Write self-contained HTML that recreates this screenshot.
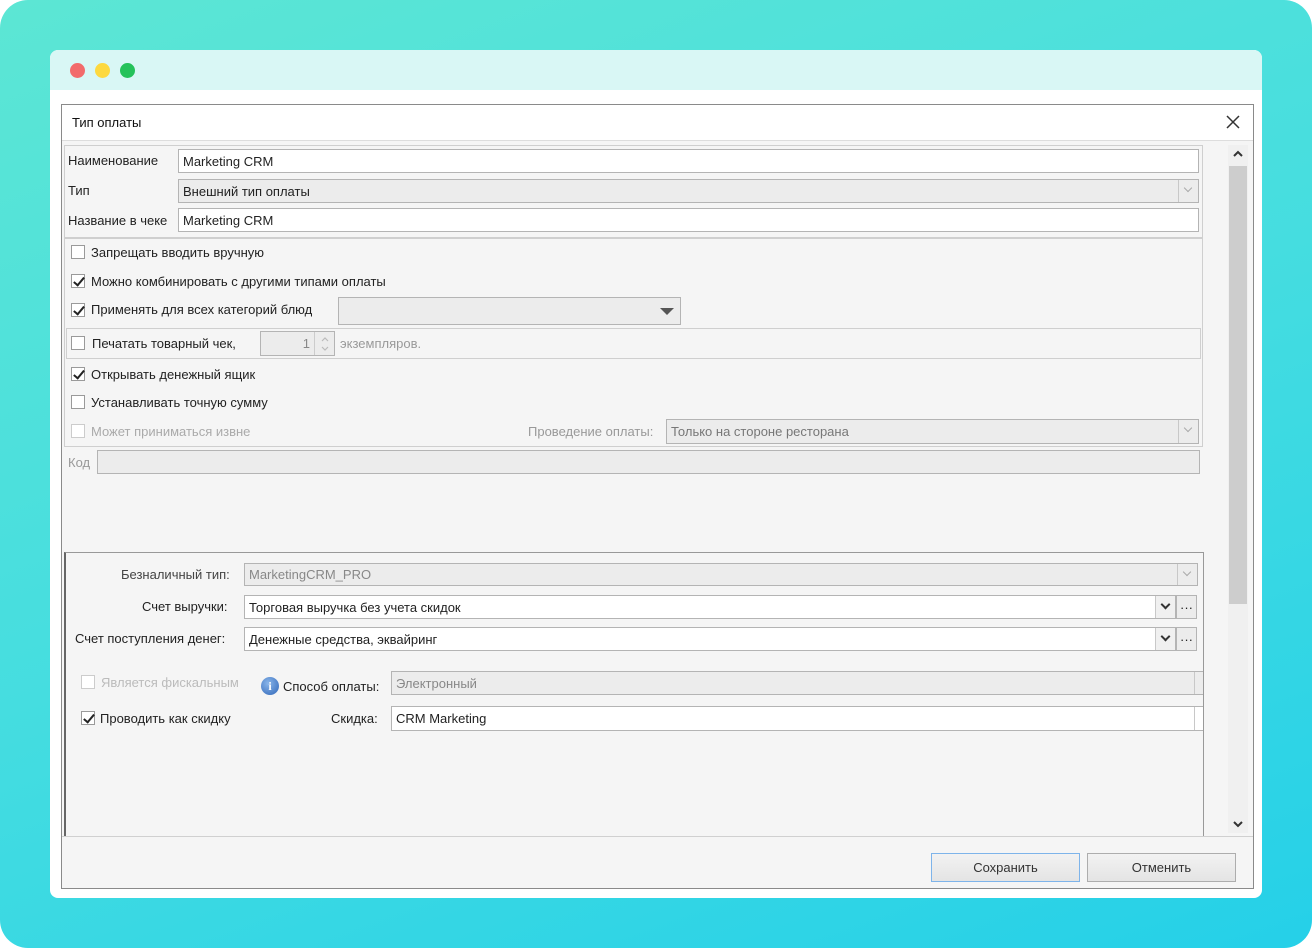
<!DOCTYPE html>
<html><head><meta charset="utf-8"><style>
*{box-sizing:border-box;margin:0;padding:0}
body{width:1312px;height:948px;background:#fff;font-family:"Liberation Sans","DejaVu Sans",sans-serif;font-size:13px;color:#222;position:relative;overflow:hidden}
.bg{position:absolute;left:0;top:0;width:1312px;height:948px;border-radius:28px;background:linear-gradient(160deg,#5ce6d4 0%,#45dde0 50%,#25d0e8 100%)}
.win{position:absolute;left:50px;top:50px;width:1212px;height:848px;background:#fff;border-radius:8px;overflow:hidden}
.tb{position:absolute;left:0;top:0;width:100%;height:40px;background:#d9f7f5}
.dot{position:absolute;top:13px;width:15px;height:15px;border-radius:50%}
.a{position:absolute}
.dlg{position:absolute;left:61px;top:104px;width:1193px;height:785px;border:1px solid #8a8a8a;background:#f5f5f5}
.inp{position:absolute;background:#fff;border:1px solid #b4b4b4;padding-left:4px;white-space:nowrap;overflow:hidden;display:flex;align-items:center}
.dis{background:#ececec;color:#888}
.gray{background:#ececec}
.cb{position:absolute;width:14px;height:14px;border:1px solid #9a9a9a;background:#fff}
.cb.c::after{content:"";position:absolute;left:4px;top:0px;width:4px;height:9px;border:solid #222;border-width:0 2px 2px 0;transform:rotate(40deg)}
.cb.d{border-color:#ccc}
.t{position:absolute;white-space:nowrap}
.gb{position:absolute;border:1px solid #cfcfcf}
.dd{position:absolute;width:20px;border-left:1px solid #c8c8c8;top:0;bottom:0;right:0}
.dd::after{content:"";position:absolute;left:6px;top:5px;width:5px;height:5px;border:solid #aaa;border-width:0 1.5px 1.5px 0;transform:rotate(45deg)}
.dd.k::after{border-color:#333;border-width:0 2px 2px 0}
.btn{position:absolute;height:29px;border:1px solid #adadad;background:linear-gradient(#f2f2f2,#e4e4e4);text-align:center;line-height:27px;font-size:13px;color:#333}
</style></head><body>
<div class="bg"></div>
<div class="win"><div class="tb"></div>
<div class="dot" style="left:20px;background:#f26b6b"></div>
<div class="dot" style="left:45px;background:#fdd93f"></div>
<div class="dot" style="left:70px;background:#25c25a"></div>
</div>
<div class="dlg"></div>
<div class="a" style="left:62px;top:105px;width:1191px;height:36px;background:#fff;border-bottom:1px solid #ddd"></div>
<div class="t" style="left:72px;top:115px;font-size:13px;color:#111">Тип оплаты</div>
<svg class="a" style="left:1225px;top:114px" width="16" height="16"><path d="M2 2L14 14M14 2L2 14" stroke="#333" stroke-width="1.5"/></svg>

<div class="gb" style="left:64px;top:145px;width:1139px;height:93px"></div>
<div class="t" style="left:68px;top:153px">Наименование</div>
<div class="inp" style="left:178px;top:149px;width:1021px;height:24px">Marketing CRM</div>
<div class="t" style="left:68px;top:183px">Тип</div>
<div class="inp gray" style="left:178px;top:179px;width:1021px;height:24px">Внешний тип оплаты<div class="dd"></div></div>
<div class="t" style="left:68px;top:213px">Название в чеке</div>
<div class="inp" style="left:178px;top:208px;width:1021px;height:24px">Marketing CRM</div>

<div class="gb" style="left:64px;top:238px;width:1139px;height:209px"></div>
<div class="cb" style="left:71px;top:245px"></div><div class="t" style="left:91px;top:245px">Запрещать вводить вручную</div>
<div class="cb c" style="left:71px;top:274px"></div><div class="t" style="left:91px;top:274px">Можно комбинировать с другими типами оплаты</div>
<div class="cb c" style="left:71px;top:303px"></div><div class="t" style="left:91px;top:302px">Применять для всех категорий блюд</div>
<div class="inp gray" style="left:338px;top:297px;width:343px;height:28px"></div>
<svg class="a" style="left:660px;top:308px" width="14" height="8"><path d="M0 0H14L7 7Z" fill="#555"/></svg>
<div class="gb" style="left:66px;top:328px;width:1135px;height:31px"></div>
<div class="cb" style="left:71px;top:336px"></div><div class="t" style="left:92px;top:336px">Печатать товарный чек,</div>
<div class="inp dis" style="left:260px;top:331px;width:75px;height:25px;justify-content:flex-end;padding-right:24px">1</div>
<div class="a" style="left:314px;top:332px;width:20px;height:23px;border-left:1px solid #ccc">
<svg class="a" style="left:5px;top:3px" width="10" height="18"><path d="M2 6L5 3L8 6M2 12L5 15L8 12" stroke="#bbb" stroke-width="1.2" fill="none"/></svg></div>
<div class="t" style="left:340px;top:336px;color:#999">экземпляров.</div>
<div class="cb c" style="left:71px;top:367px"></div><div class="t" style="left:91px;top:367px">Открывать денежный ящик</div>
<div class="cb" style="left:71px;top:395px"></div><div class="t" style="left:91px;top:395px">Устанавливать точную сумму</div>
<div class="cb d" style="left:71px;top:424px"></div><div class="t" style="left:91px;top:424px;color:#aaa">Может приниматься извне</div>
<div class="t" style="left:528px;top:424px;color:#999">Проведение оплаты:</div>
<div class="inp dis" style="left:666px;top:419px;width:533px;height:25px;color:#777">Только на стороне ресторана<div class="dd"></div></div>
<div class="t" style="left:68px;top:455px;color:#999">Код</div>
<div class="inp dis" style="left:97px;top:450px;width:1103px;height:24px"></div>

<div class="a" style="left:64px;top:552px;width:1140px;height:284px;border:1px solid #999;border-left:2px solid #666;border-bottom:none"></div>
<div class="t" style="left:121px;top:567px;color:#444">Безналичный тип:</div>
<div class="inp dis" style="left:244px;top:563px;width:954px;height:23px">MarketingCRM_PRO<div class="dd"></div></div>
<div class="t" style="left:142px;top:599px">Счет выручки:</div>
<div class="inp" style="left:244px;top:595px;width:932px;height:24px">Торговая выручка без учета скидок<div class="dd k" style="background:#f0f0f0"></div></div>
<div class="inp gray" style="left:1176px;top:595px;width:21px;height:24px;padding:0;justify-content:center">···</div>
<div class="t" style="left:75px;top:631px">Счет поступления денег:</div>
<div class="inp" style="left:244px;top:627px;width:932px;height:24px">Денежные средства, эквайринг<div class="dd k" style="background:#f0f0f0"></div></div>
<div class="inp gray" style="left:1176px;top:627px;width:21px;height:24px;padding:0;justify-content:center">···</div>
<div class="cb d" style="left:81px;top:675px"></div><div class="t" style="left:101px;top:675px;color:#bbb">Является фискальным</div>
<div class="a" style="left:261px;top:677px;width:18px;height:18px;border-radius:50%;background:radial-gradient(circle at 40% 35%,#8ab6ea,#2f66b8);color:#fff;font-weight:bold;font-size:12px;text-align:center;line-height:18px;font-family:'Liberation Serif',serif">i</div>
<div class="t" style="left:283px;top:679px">Способ оплаты:</div>
<div class="inp dis" style="left:391px;top:671px;width:812px;height:24px;border-right:none">Электронный<div class="a" style="right:8px;top:0;bottom:0;border-left:1px solid #c8c8c8;width:1px"></div></div>
<div class="cb c" style="left:81px;top:711px"></div><div class="t" style="left:100px;top:711px">Проводить как скидку</div>
<div class="t" style="left:331px;top:711px">Скидка:</div>
<div class="inp" style="left:391px;top:706px;width:812px;height:25px;border-right:none">CRM Marketing<div class="a" style="right:8px;top:0;bottom:0;border-left:1px solid #c8c8c8;width:1px"></div></div>

<div class="a" style="left:1228px;top:145px;width:20px;height:688px;background:#f0f0f0"></div>
<div class="a" style="left:1229px;top:166px;width:18px;height:438px;background:#cdcdcd"></div>
<svg class="a" style="left:1232px;top:150px" width="12" height="8"><path d="M2 6L6 2L10 6" stroke="#333" stroke-width="2" fill="none"/></svg>
<svg class="a" style="left:1232px;top:820px" width="12" height="8"><path d="M2 2L6 6L10 2" stroke="#333" stroke-width="2" fill="none"/></svg>
<div class="a" style="left:62px;top:836px;width:1191px;height:1px;background:#d0d0d0"></div>
<div class="btn" style="left:931px;top:853px;width:149px;border-color:#7eb4ea">Сохранить</div>
<div class="btn" style="left:1087px;top:853px;width:149px">Отменить</div>
</body></html>
